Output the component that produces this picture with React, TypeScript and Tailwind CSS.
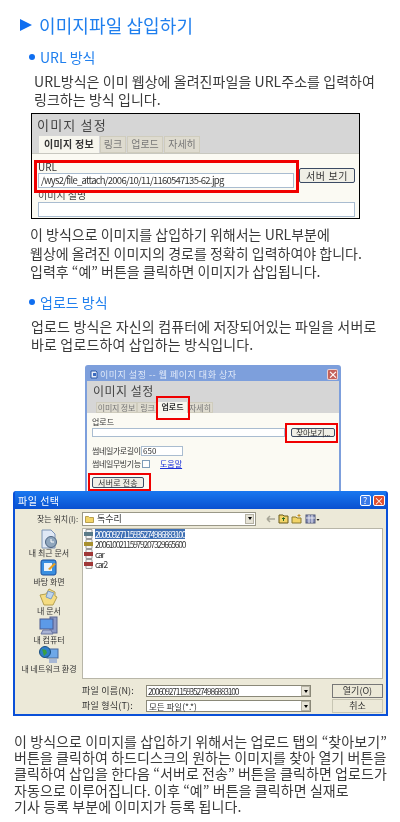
import React, { FC, ReactNode } from 'react';

const RedBox: FC<{ className: string }> = ({ className }) => (
  <div className={`absolute border-[2px] border-[#f00000] pointer-events-none ${className}`} />
);

const Bullet: FC<{ children: ReactNode; className?: string }> = ({ children, className = '' }) => (
  <div className={`flex items-center gap-[5px] text-[14px] leading-[18px] text-[#1f7fee] ${className}`}>
    <span className="w-[6px] h-[6px] rounded-full bg-[#0f6ef0]" />
    {children}
  </div>
);

const XpButton: FC<{ children: ReactNode; className?: string }> = ({ children, className = '' }) => (
  <div
    className={`flex items-center justify-center whitespace-nowrap rounded-[2px] border border-[#3b4a63] bg-[#f0efe6] text-[#333] ${className}`}
  >
    {children}
  </div>
);

const ComboArrow = () => (
  <span className="flex items-center justify-center w-[9px] h-[10px] bg-[#e6e3d6] border border-[#b5b2a4]">
    <span className="w-0 h-0 border-x-[2.5px] border-x-transparent border-t-[3px] border-t-black" />
  </span>
);

const UrlPanel = () => (
  <div className="relative w-[329px] h-[106px] ml-[31px] mt-[5px] border border-black bg-[#d6d6d6] overflow-hidden">
    <div className="h-[22px] pl-[5px] pt-[2px] text-[13px] leading-[18px] tracking-[1.2px] text-[#444]">이미지 설정</div>
    <div className="flex h-[17px] pl-[7px] gap-px text-[10px] leading-[16px] text-[#777]">
      <div className="w-[60px] bg-[#f7f6ee] text-center font-bold text-[#333] tracking-[0.3px]">이미지 정보</div>
      <div className="w-[26px] bg-[#dedbcf] border border-[#cfccbd] text-center leading-[14px]">링크</div>
      <div className="w-[36px] bg-[#dedbcf] border border-[#cfccbd] text-center leading-[14px]">업로드</div>
      <div className="w-[36px] bg-[#dedbcf] border border-[#cfccbd] text-center leading-[14px]">자세히</div>
    </div>
    <div className="h-[66px] bg-[#fbfaf3] border-t border-[#c8c8c0] pl-[6px] pr-[4px]">
      <div className="text-[10px] leading-[12px] pt-[7px] h-[19px] text-[#333]">URL</div>
      <div className="flex gap-[5px]">
        <div className="w-[256px] h-[15px] border border-[#a9bcd0] bg-white text-[9.5px] leading-[13px] pl-[2px] text-[#333] tracking-[-0.75px] whitespace-nowrap">
          /wys2/file_attach/2006/10/11/1160547135-62.jpg
        </div>
        <XpButton className="w-[56px] h-[15px] -mt-[5px] text-[10px] tracking-[0.6px]">서버 보기</XpButton>
      </div>
      <div className="text-[10px] leading-[12px] mt-[1px] h-[13px] text-[#444]">이미지 설명</div>
      <div className="w-[317px] h-[15px] border border-[#a9bcd0] bg-white" />
    </div>
    <RedBox className="left-[2px] top-[46px] w-[265px] h-[33px] !border-[3px]" />
  </div>
);

const UploadDialog = () => (
  <div className="relative w-[256px] h-[126px] ml-[85px] mt-[11.5px] bg-[#7d9fdc] rounded-t-[3px] px-[2px] overflow-hidden">
    <div className="h-[16px] flex items-center pl-[3px] pr-[1px] pt-[3px] text-[9px] tracking-[0.5px] text-[#dfe8f8] whitespace-nowrap">
      <svg width="8" height="9" viewBox="0 0 8 9" className="mr-[2px]">
        <path d="M1 1h5l1 1v6H1z" fill="#e8eefa" stroke="#2f5aa8" />
        <path d="M3 3h3v3H3z" fill="#3a6ac0" />
      </svg>
      이미지 설정 -- 웹 페이지 대화 상자
      <span className="ml-auto w-[11px] h-[11px] rounded-[2px] bg-[#c4615a] border border-white/70 text-white text-[10px] leading-[9px] text-center font-bold">
        ×
      </span>
    </div>
    <div className="bg-[#d6d6d6] h-[110px]">
      <div className="h-[21px] pl-[6px] pt-[1px] text-[12px] leading-[18px] tracking-[0.5px] text-[#444]">이미지 설정</div>
      <div className="flex h-[11px] pl-[9px] text-[8px] leading-[10px] text-[#777] whitespace-nowrap">
        <div className="w-[41px] bg-[#dedbcf] border border-[#cfccbd] text-center tracking-[-0.2px]">이미지 정보</div>
        <div className="w-[21px] bg-[#dedbcf] border border-[#cfccbd] text-center">링크</div>
        <div className="w-[29px] bg-[#f7f6ee] text-center font-bold text-[#333]">업로드</div>
        <div className="w-[26px] bg-[#dedbcf] border border-[#cfccbd] text-center">자세히</div>
      </div>
      <div className="h-[78px] bg-[#fbfaf3] pl-[5px] text-[8px] leading-[10px] text-[#333] whitespace-nowrap">
        <div className="pt-[4px] h-[15px]">업로드</div>
        <div className="flex gap-[6px]">
          <div className="w-[193px] h-[9px] border border-[#a9bcd0] bg-white" />
          <XpButton className="w-[44px] h-[9px] text-[8px] tracking-[-0.3px]">찾아보기...</XpButton>
        </div>
        <div className="flex items-center mt-[9px] h-[10px]">
          <span className="w-[49px] tracking-[-0.4px]">썸네일가로길이</span>
          <span className="w-[42px] h-[10px] border border-[#a9bcd0] bg-white pl-[1px] leading-[8px]">650</span>
        </div>
        <div className="flex items-center mt-[3px] h-[10px]">
          <span className="w-[50px] tracking-[-0.4px]">썸네일무빙기능</span>
          <span className="w-[8px] h-[8px] border border-[#7f9db9] bg-white" />
          <span className="ml-[10px] text-[#1a30d8] underline">도움말</span>
        </div>
        <XpButton className="w-[52px] h-[11px] mt-[8px] text-[8px] tracking-[0.2px]">서버로 전송</XpButton>
      </div>
    </div>
    <RedBox className="left-[71px] top-[31px] w-[34px] h-[24px]" />
    <RedBox className="left-[200px] top-[58px] w-[53px] h-[20px]" />
    <RedBox className="left-[3px] top-[108px] w-[63px] h-[18px]" />
  </div>
);

const PlaceIcon: FC<{ kind: string }> = ({ kind }) => {
  if (kind === 'recent')
    return (
      <svg width="20" height="20" viewBox="0 0 20 20">
        <path d="M3 1h9l4 4v14H3z" fill="#dfe8f5" stroke="#7d94b5" />
        <circle cx="12" cy="13" r="5.5" fill="#8fa6bd" stroke="#4d6480" />
        <path d="M12 10v3h3" stroke="#fff" fill="none" />
      </svg>
    );
  if (kind === 'desktop')
    return (
      <svg width="20" height="20" viewBox="0 0 20 20">
        <rect x="2" y="2" width="15" height="15" rx="2" fill="#3a8fe0" stroke="#1c4f9c" />
        <rect x="5" y="5" width="8" height="8" fill="#eaf3fb" />
        <path d="M9 11l6-6 2 1-6 6z" fill="#e8a020" />
      </svg>
    );
  if (kind === 'docs')
    return (
      <svg width="20" height="20" viewBox="0 0 20 20">
        <path d="M1 8l6-1 3-5 6 3v4l2 1-4 8H5z" fill="#f5dc82" stroke="#b5a050" />
        <path d="M9 4l6 2-3 6-5-2z" fill="#bcd4ee" stroke="#7d9cc0" />
      </svg>
    );
  if (kind === 'computer')
    return (
      <svg width="20" height="20" viewBox="0 0 20 20">
        <rect x="11" y="1" width="7" height="16" fill="#8d99c4" stroke="#5a668f" />
        <rect x="1" y="3" width="13" height="10" fill="#5c9ae8" stroke="#4a5a90" />
        <path d="M4 14h8l2 4H2z" fill="#aab4d4" stroke="#6a76a0" />
      </svg>
    );
  return (
    <svg width="20" height="20" viewBox="0 0 20 20">
      <rect x="8" y="4" width="11" height="9" fill="#6ea8e8" stroke="#4a6a9c" />
      <path d="M10 14h8v4h-8z" fill="#a8b8d4" />
      <circle cx="6" cy="7" r="5.5" fill="#2f7fc8" stroke="#1a4f80" />
      <path d="M3 4l4 1 1 3-3 3z" fill="#3aa040" />
    </svg>
  );
};

const places = [
  { kind: 'recent', label: '내 최근 문서' },
  { kind: 'desktop', label: '바탕 화면' },
  { kind: 'docs', label: '내 문서' },
  { kind: 'computer', label: '내 컴퓨터' },
  { kind: 'network', label: '내 네트워크 환경' },
];

const files = [
  { name: '20060927115935274986883100', tag: '#5a7a88', selected: true },
  { name: '20061002115979207329665600', tag: '#a89030', selected: false },
  { name: 'car', tag: '#a03838', selected: false },
  { name: 'car2', tag: '#a03838', selected: false },
];

const FileIcon: FC<{ tag: string }> = ({ tag }) => (
  <svg width="10" height="10" viewBox="0 0 10 10" className="mr-[1px] shrink-0">
    <path d="M2 0.5h6v9H2z" fill="#f4f4f4" stroke="#9a9a9a" />
    <rect x="0" y="3" width="9" height="4" fill={tag} />
  </svg>
);

const Toolbar = () => (
  <svg width="54" height="12" viewBox="0 0 54 12" className="ml-[10px] shrink-0">
    <path d="M1 6h8M1 6l3-3M1 6l3 3" stroke="#a8a698" strokeWidth="1.5" fill="none" />
    <path d="M13 2h4l1 1h4v7h-9z" fill="#f2d468" stroke="#6a5a18" />
    <path d="M17.5 8V5M16 6l1.5-1.5L19 6" stroke="#2a6a20" fill="none" />
    <path d="M26 4h4l1 1h4v5h-9z" fill="#f2d468" stroke="#8a7a30" />
    <path d="M33 1v3M31.5 2.5h3" stroke="#c89020" />
    <rect x="40" y="2" width="9" height="8" fill="#8890b8" stroke="#505878" />
    <path d="M43 2v8M46 2v8M40 5h9" stroke="#e8e8f0" />
    <path d="M50.5 6h3l-1.5 2z" fill="#222" />
  </svg>
);

const FileDialog = () => (
  <div className="w-[375px] h-[225px] ml-[13px] bg-[#0a50d8] rounded-t-[3px] px-[2px] pb-[2px] overflow-hidden whitespace-nowrap">
    <div className="h-[18px] flex items-center pl-[3px] pr-[1px] gap-[2px] text-[10px] tracking-[0.5px] text-white bg-gradient-to-b from-[#1a78f0] to-[#0a50d0]">
      <span className="mr-auto">파일 선택</span>
      <span className="w-[11px] h-[11px] rounded-[2px] bg-[#3a7ae8] border border-white text-[9px] leading-[9px] text-center">?</span>
      <span className="w-[12px] h-[11px] rounded-[2px] bg-[#e05030] border border-white text-[10px] leading-[9px] text-center">×</span>
    </div>
    <div className="h-[205px] flex bg-[#ece9d8] text-[9px] text-[#333]">
      <div className="w-[67px] shrink-0 pt-[20px] pl-[1px] flex flex-col items-center">
        {places.map((p) => (
          <div key={p.kind} className="h-[29px] flex flex-col items-center leading-[9px] text-[8px]">
            <PlaceIcon kind={p.kind} />
            <span className="-mt-[1px]">{p.label}</span>
          </div>
        ))}
      </div>
      <div className="flex-1 min-w-0 pr-[3px]">
        <div className="h-[19px] flex items-center -ml-[45px]">
          <span className="w-[45px] shrink-0 text-[8px]">찾는 위치(I):</span>
          <div className="w-[174px] h-[14px] shrink-0 border border-[#9a9888] bg-white flex items-center pl-[2px] text-[9px]">
            <svg width="10" height="8" viewBox="0 0 10 8" className="mr-[2px]">
              <path d="M0.5 1.5h3l1 1h4v5h-8z" fill="#f2d468" stroke="#b8a050" />
            </svg>
            독수리
            <span className="ml-auto mr-[1px]"><ComboArrow /></span>
          </div>
          <Toolbar />
        </div>
        <div className="h-[151px] bg-white border border-[#b8b6a8] pl-[1px] text-[8.5px] leading-[10px] tracking-[-1.25px]">
          {files.map((f) => (
            <div key={f.name} className="h-[10px] flex items-center">
              <FileIcon tag={f.tag} />
              <span className={f.selected ? 'bg-[#3e6fb4] text-white' : ''}>{f.name}</span>
            </div>
          ))}
        </div>
        <div className="flex mt-[5px] h-[14px] items-center">
          <span className="w-[64px] tracking-[0.2px]">파일 이름(N):</span>
          <div className="w-[165px] h-[12px] border border-[#8a8878] bg-white flex items-center pl-[1px] text-[8.5px] tracking-[-1.25px]">
            20060927115935274986883100
            <span className="ml-auto"><ComboArrow /></span>
          </div>
          <XpButton className="ml-[21px] w-[51px] h-[14px] !rounded-none !border-[#777] !bg-[#ece9d8]">열기(O)</XpButton>
        </div>
        <div className="flex mt-[1px] h-[14px] items-center">
          <span className="w-[64px] tracking-[0.2px]">파일 형식(T):</span>
          <div className="w-[165px] h-[12px] border border-[#8a8878] bg-white flex items-center pl-[2px] text-[8.5px]">
            모든 파일(*.*)
            <span className="ml-auto"><ComboArrow /></span>
          </div>
          <XpButton className="ml-[21px] w-[51px] h-[14px] !rounded-none !border-[#c8c6b4] !bg-[#ece9d8]">취소</XpButton>
        </div>
      </div>
    </div>
  </div>
);

const App: FC = () => {
  return (
    <div className="w-[400px] h-[822px] bg-white overflow-hidden font-['Noto_Sans_CJK_KR',sans-serif] text-[#3a3a3a] blur-[0.35px]">
      <div className="flex items-center pt-[13px] pl-[20px] h-[37px] text-[18px] leading-[24px] tracking-[0.1px] text-[#1f7fee]">
        <span className="w-0 h-0 border-y-[6.5px] border-y-transparent border-l-[12px] border-l-[#0f6ef0] mr-[7px]" />
        이미지파일 삽입하기
      </div>
      <Bullet className="ml-[29px] mt-[11px]">URL 방식</Bullet>
      <p className="ml-[34px] mt-[6px] text-[14px] leading-[18px] tracking-[0.05px] whitespace-nowrap">
        URL방식은 이미 웹상에 올려진파일을 URL주소를 입력하여
        <br />
        링크하는 방식 입니다.
      </p>
      <UrlPanel />
      <p className="ml-[30px] mt-[6px] text-[14px] leading-[18.5px] whitespace-nowrap">
        이 방식으로 이미지를 삽입하기 위해서는 URL부분에
        <br />
        웹상에 올려진 이미지의 경로를 정확히 입력하여야 합니다.
        <br />
        입력후 “예” 버튼을 클릭하면 이미지가 삽입됩니다.
      </p>
      <Bullet className="ml-[29px] mt-[12px]">업로드 방식</Bullet>
      <p className="ml-[31px] mt-[6px] text-[14px] leading-[18.5px] tracking-[0.15px] whitespace-nowrap">
        업로드 방식은 자신의 컴퓨터에 저장되어있는 파일을 서버로
        <br />
        바로 업로드하여 삽입하는 방식입니다.
      </p>
      <UploadDialog />
      <FileDialog />
      <p className="ml-[14px] mt-[16.5px] text-[14px] leading-[16.4px] tracking-[0.08px] whitespace-nowrap">
        이 방식으로 이미지를 삽입하기 위해서는 업로드 탭의 “찾아보기”
        <br />
        버튼을 클릭하여 하드디스크의 원하는 이미지를 찾아 열기 버튼을
        <br />
        클릭하여 삽입을 한다음 “서버로 전송” 버튼을 클릭하면 업로드가
        <br />
        자동으로 이루어집니다. 이후 “예” 버튼을 클릭하면 실재로
        <br />
        기사 등록 부분에 이미지가 등록 됩니다.
      </p>
    </div>
  );
};

export default App;
